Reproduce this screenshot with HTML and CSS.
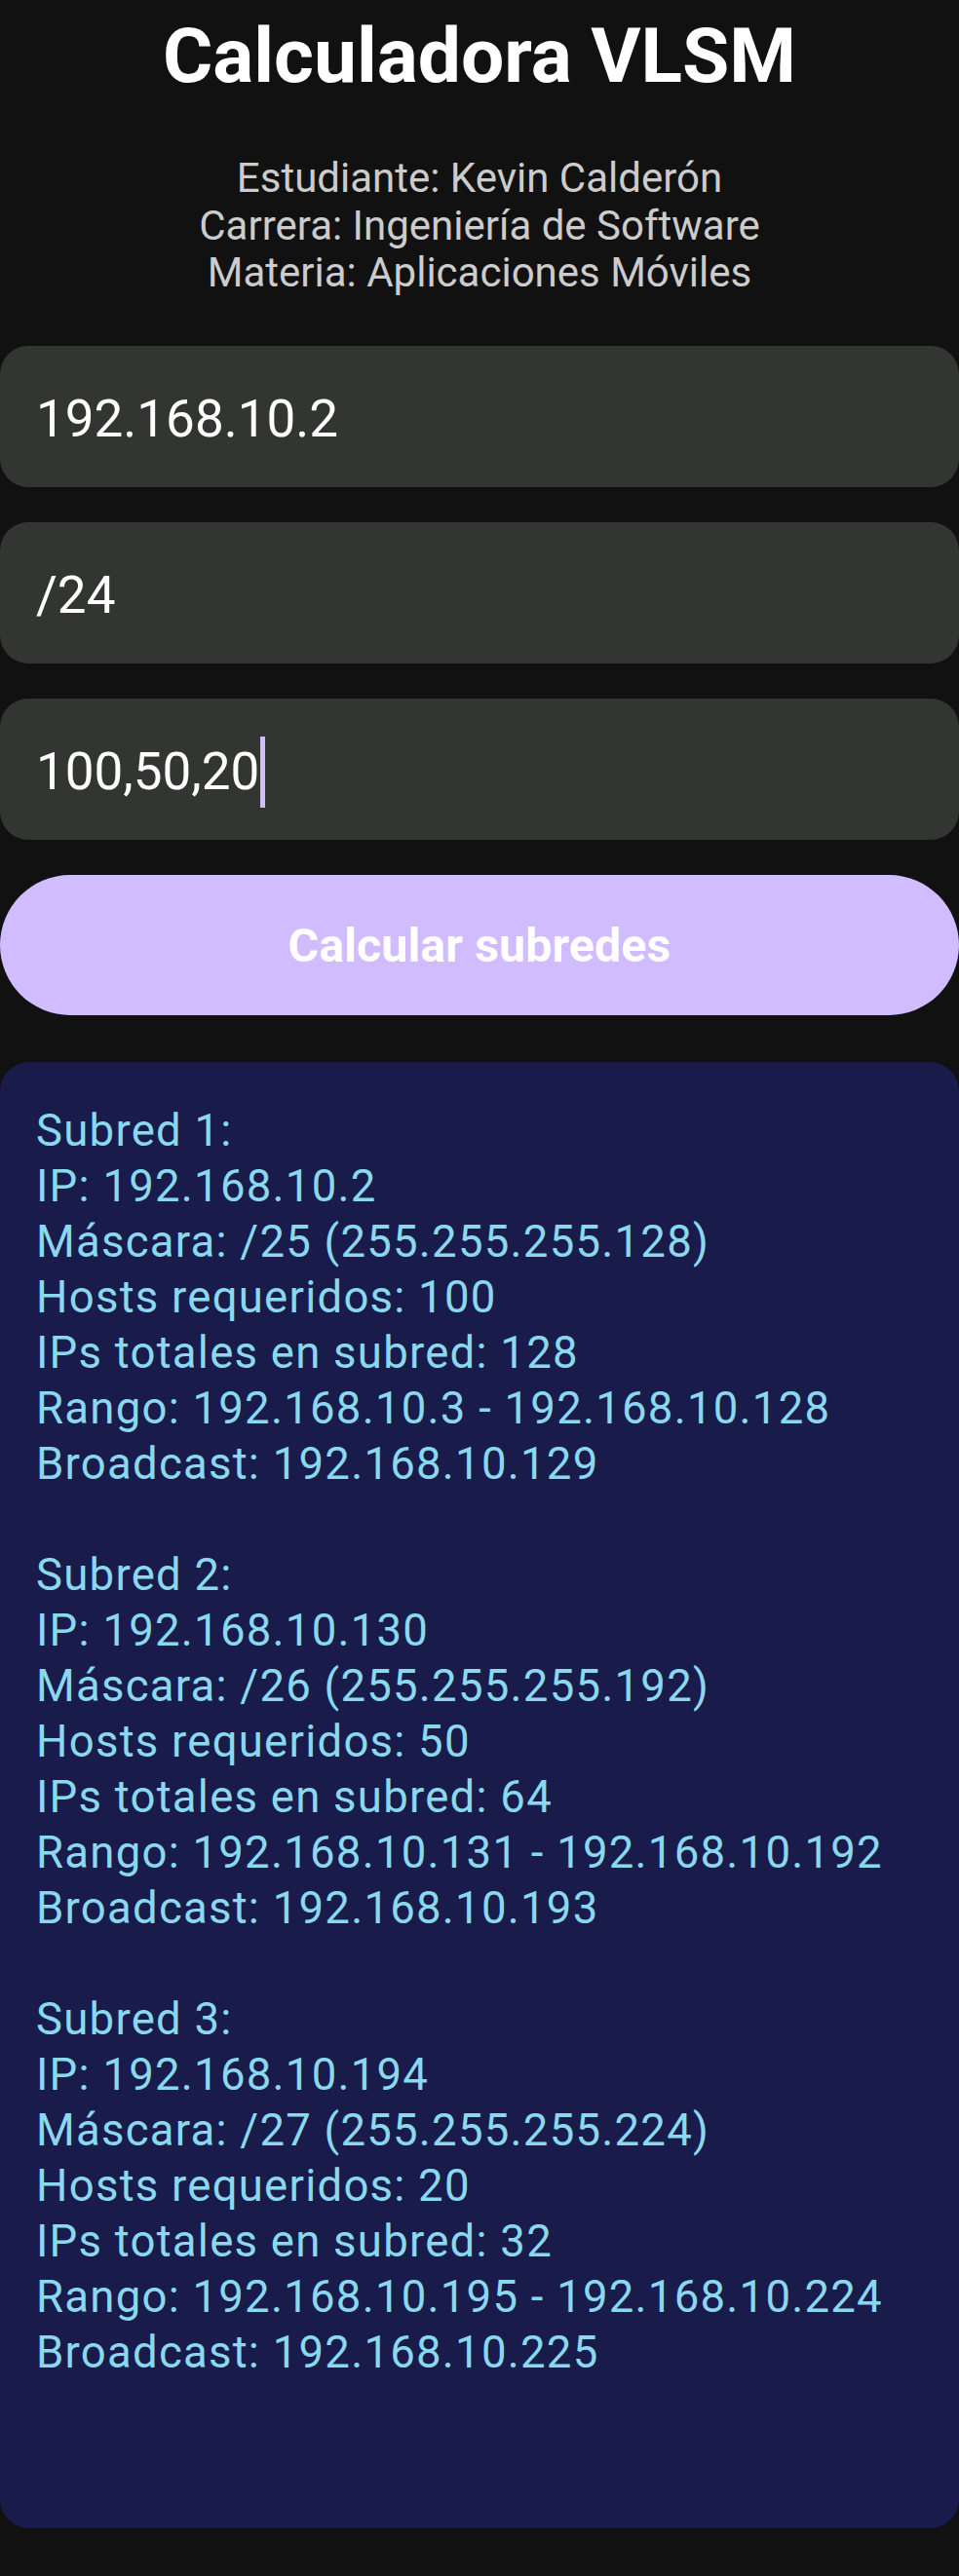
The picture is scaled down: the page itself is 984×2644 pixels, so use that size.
FILE: index.html
```html
<!DOCTYPE html>
<html lang="es">
<head>
<meta charset="utf-8">
<title>Calculadora VLSM</title>
<link rel="stylesheet" href="styles.css">
</head>
<body>
<main class="screen">
  <h1 class="title">Calculadora VLSM</h1>
  <div class="info">
    <p>Estudiante: Kevin Calderón</p>
    <p>Carrera: Ingeniería de Software</p>
    <p>Materia: Aplicaciones Móviles</p>
  </div>
  <div class="fields">
    <div class="field"><span class="value">192.168.10.2</span></div>
    <div class="field"><span class="value">/24</span></div>
    <div class="field"><span class="value">100,50,20</span><span class="caret"></span></div>
  </div>
  <button class="calc-btn" type="button">Calcular subredes</button>
  <section class="result">
    <div class="block">
      <p>Subred 1:</p>
      <p>IP: 192.168.10.2</p>
      <p>Máscara: /25 (255.255.255.128)</p>
      <p>Hosts requeridos: 100</p>
      <p>IPs totales en subred: 128</p>
      <p>Rango: 192.168.10.3 - 192.168.10.128</p>
      <p>Broadcast: 192.168.10.129</p>
    </div>
    <div class="block">
      <p>Subred 2:</p>
      <p>IP: 192.168.10.130</p>
      <p>Máscara: /26 (255.255.255.192)</p>
      <p>Hosts requeridos: 50</p>
      <p>IPs totales en subred: 64</p>
      <p>Rango: 192.168.10.131 - 192.168.10.192</p>
      <p>Broadcast: 192.168.10.193</p>
    </div>
    <div class="block">
      <p>Subred 3:</p>
      <p>IP: 192.168.10.194</p>
      <p>Máscara: /27 (255.255.255.224)</p>
      <p>Hosts requeridos: 20</p>
      <p>IPs totales en subred: 32</p>
      <p>Rango: 192.168.10.195 - 192.168.10.224</p>
      <p>Broadcast: 192.168.10.225</p>
    </div>
  </section>
</main>
</body>
</html>
```
FILE: styles.css
```css
html, body {
  margin: 0;
  padding: 0;
  background: #111111;
}
body {
  font-family: Roboto, "Liberation Sans", sans-serif;
  color: #ffffff;
}
p { margin: 0; }
.screen {
  display: flex;
  flex-direction: column;
  padding-top: 12px;
  padding-bottom: 48px;
}
.title {
  margin: 0;
  text-align: center;
  font-size: 78.5px;
  font-weight: 700;
  line-height: 91px;
  color: #ffffff;
}
.info {
  margin-top: 56px;
  text-align: center;
  font-size: 42px;
  line-height: 48.7px;
  color: #cccccc;
}
.fields {
  margin-top: 50px;
  display: flex;
  flex-direction: column;
  gap: 36px;
}
.field {
  height: 145px;
  box-sizing: border-box;
  background: #333532;
  border-radius: 29px;
  padding: 5px 37px 0;
  display: flex;
  align-items: center;
  font-size: 53px;
  color: #ffffff;
}
.caret {
  display: inline-block;
  width: 5px;
  height: 73px;
  margin-left: 1px;
  background: #d0bcff;
}
.calc-btn {
  margin-top: 36px;
  height: 144px;
  border: none;
  border-radius: 72px;
  background: #d0bcff;
  color: #ffffff;
  font-family: Roboto, "Liberation Sans", sans-serif;
  font-size: 48.5px;
  font-weight: 700;
  padding: 0;
  width: 100%;
}
.result {
  margin-top: 48px;
  background: #191b4a;
  border-radius: 30px;
  padding: 42px 37px 95px;
  color: #8ad8ee;
  font-size: 45.5px;
  letter-spacing: 1.25px;
  line-height: 57px;
}
.block {
  margin-bottom: 57px;
}
```
